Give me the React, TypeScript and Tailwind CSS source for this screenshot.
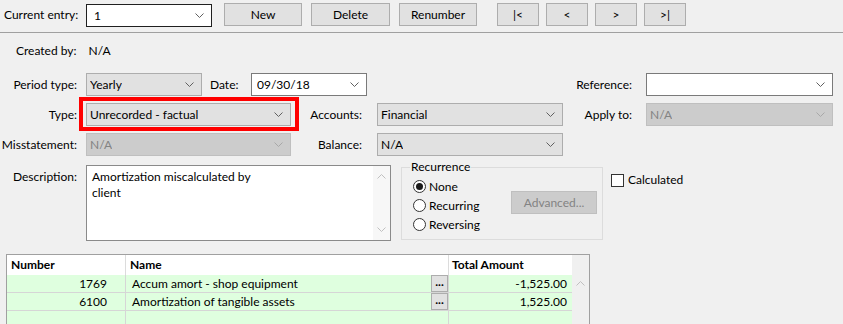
import React from "react";

// small windows-style dropdown arrow
const Chevron = ({ color = "#606060" }: { color?: string }) => (
  <svg width="9" height="5" viewBox="0 0 9 5" className="shrink-0">
    <path d="M0.5 0.5 L4.5 4.5 L8.5 0.5" fill="none" stroke={color} strokeWidth="1" />
  </svg>
);

const ChevronUp = ({ color = "#c0c0c0" }: { color?: string }) => (
  <svg width="9" height="5" viewBox="0 0 9 5" className="shrink-0">
    <path d="M0.5 4.5 L4.5 0.5 L8.5 4.5" fill="none" stroke={color} strokeWidth="1" />
  </svg>
);

type ComboProps = {
  text?: string;
  variant?: "white" | "gray" | "disabled" | "focus";
  className?: string;
};

const Combo = ({ text = "", variant = "gray", className = "" }: ComboProps) => {
  const look =
    variant === "white"
      ? "bg-white border-[#7a7a7a] text-black pl-[5px]"
      : variant === "focus"
      ? "bg-white border-[#202020] text-black pl-[7px]"
      : variant === "disabled"
      ? "bg-[#cccccc] border-[#bfbfbf] text-[#838383] pl-[3px]"
      : "bg-[#e1e1e1] border-[#adadad] text-black pl-[3px]";
  return (
    <div className={`flex items-center h-[23px] border pr-[7px] shrink-0 ${look} ${className}`}>
      <span className="truncate">{text}</span>
      <span className="ml-auto">
        <Chevron color={variant === "disabled" ? "#a8a8a8" : "#606060"} />
      </span>
    </div>
  );
};

const Btn = ({ label, className = "" }: { label: string; className?: string }) => (
  <button
    className={`h-[23px] border border-[#adadad] bg-[#e1e1e1] text-black flex items-center justify-center shrink-0 ${className}`}
  >
    {label}
  </button>
);

const Radio = ({ label, checked = false }: { label: string; checked?: boolean }) => (
  <div className="h-[19px] flex items-center">
    <span className="w-[13px] h-[13px] rounded-full border border-[#333] bg-white flex items-center justify-center">
      {checked && <span className="w-[7px] h-[7px] rounded-full bg-[#1a1a1a]" />}
    </span>
    <span className="ml-[3px]">{label}</span>
  </div>
);

const rows = [
  { num: "1769", name: "Accum amort - shop equipment", amt: "-1,525.00" },
  { num: "6100", name: "Amortization of tangible assets", amt: "1,525.00" },
];

export default function App() {
  return (
    <div className="w-[843px] h-[324px] overflow-hidden bg-[#f0f0f0] text-[12px] leading-[16px] text-black font-['Segoe_UI','Lato',sans-serif]">
      {/* toolbar */}
      <div className="h-[33px] border-b border-[#a0a0a0] flex items-start pt-[3px] pl-[4px]">
        <span className="w-[82px] h-[24px] flex items-center">Current entry:</span>
        <Combo text="1" variant="focus" className="w-[126px] mt-[1px]" />
        <Btn label="New" className="ml-[12px] w-[78px]" />
        <Btn label="Delete" className="ml-[9px] w-[79px]" />
        <Btn label="Renumber" className="ml-[9px] w-[78px]" />
        <Btn label="|<" className="ml-[20px] w-[42px]" />
        <Btn label="<" className="ml-[7px] w-[42px]" />
        <Btn label=">" className="ml-[7px] w-[42px]" />
        <Btn label=">|" className="ml-[7px] w-[42px]" />
      </div>

      {/* created by */}
      <div className="mt-[8px] h-[20px] pl-[16px] flex items-center">
        <span>Created by:</span>
        <span className="ml-[12px]">N/A</span>
      </div>

      {/* period / date / reference */}
      <div className="mt-[12px] h-[23px] flex items-center">
        <span className="w-[77px] text-right">Period type:</span>
        <Combo text="Yearly" className="ml-[9px] w-[116px]" />
        <span className="ml-[8px] w-[41px]">Date:</span>
        <Combo text="09/30/18" variant="white" className="w-[116px]" />
        <span className="w-[279px] text-right pr-[14px]">Reference:</span>
        <Combo variant="white" className="w-[187px]" />
      </div>

      {/* type / accounts / apply to */}
      <div className="mt-[7px] h-[23px] flex items-center">
        <span className="w-[77px] text-right">Type:</span>
        <div className="relative ml-[9px]">
          <Combo text="Unrecorded - factual" className="w-[205px]" />
          <span className="absolute left-[-7px] top-[-6px] right-[-8px] bottom-[-5px] border-[4px] border-[#ff0000] pointer-events-none" />
        </div>
        <span className="w-[86px] text-right pr-[15px]">Accounts:</span>
        <Combo text="Financial" className="w-[186px]" />
        <span className="w-[83px] text-right pr-[14px]">Apply to:</span>
        <Combo text="N/A" variant="disabled" className="w-[187px]" />
      </div>

      {/* misstatement / balance */}
      <div className="mt-[7px] h-[23px] flex items-center">
        <span className="w-[77px] text-right">Misstatement:</span>
        <Combo text="N/A" variant="disabled" className="ml-[9px] w-[205px]" />
        <span className="w-[86px] text-right pr-[15px]">Balance:</span>
        <Combo text="N/A" className="w-[186px]" />
      </div>

      {/* description / recurrence / calculated */}
      <div className="mt-[9px] flex items-start">
        <span className="w-[77px] text-right pt-[4px]">Description:</span>
        <div className="ml-[9px] w-[305px] h-[76px] border border-[#8a8a8a] bg-white flex">
          <div className="flex-1 pl-[5px] pt-[3px]">
            Amortization miscalculated by
            <br />
            client
          </div>
          <div className="w-[17px] bg-[#f7f7f7] flex flex-col items-center justify-between py-[8px]">
            <ChevronUp />
            <Chevron color="#c0c0c0" />
          </div>
        </div>

        <fieldset className="ml-[10px] mt-[-6px] w-[202px] h-[81px] border border-[#dcdcdc] pl-[11px] pr-[4px]">
          <legend className="ml-[-3px] px-[1px]">Recurrence</legend>
          <div className="flex mt-[2px]">
            <div className="w-[98px]">
              <Radio label="None" checked />
              <Radio label="Recurring" />
              <Radio label="Reversing" />
            </div>
            <button className="mt-[14px] w-[86px] h-[23px] border border-[#bfbfbf] bg-[#cccccc] text-[#838383]">
              Advanced...
            </button>
          </div>
        </fieldset>

        <div className="ml-[8px] mt-[7px] flex items-center">
          <span className="w-[13px] h-[13px] border border-[#333] bg-white" />
          <span className="ml-[4px]">Calculated</span>
        </div>
      </div>

      {/* accounts grid */}
      <div className="mt-[13px] ml-[6px] w-[584px] h-[90px] border border-[#a0a0a0] bg-white flex">
        <div className="w-[565px]">
          <div className="h-[20px] flex font-bold">
            <div className="w-[119px] border-r border-[#dcdcdc] pl-[4px] flex items-center">Number</div>
            <div className="w-[323px] border-r border-[#dcdcdc] pl-[4px] flex items-center">Name</div>
            <div className="flex-1 pl-[3px] flex items-center">Total Amount</div>
          </div>
          {rows.map((r) => (
            <div key={r.num} className="h-[18px] flex bg-[#dfffdf] border-b border-[#d6d6d6]">
              <div className="w-[119px] border-r border-[#d6d6d6] pr-[18px] flex items-center justify-end">{r.num}</div>
              <div className="w-[323px] border-r border-[#d6d6d6] pl-[6px] flex items-center">
                <span>{r.name}</span>
                <span className="ml-auto w-[17px] h-[17px] border border-[#adadad] bg-[#e1e1e1] flex items-center justify-center font-bold leading-none pb-[4px]">
                  ...
                </span>
              </div>
              <div className="flex-1 pr-[5px] flex items-center justify-end">{r.amt}</div>
            </div>
          ))}
          <div className="h-[18px] flex bg-[#dfffdf]">
            <div className="w-[119px] border-r border-[#d6d6d6]" />
            <div className="w-[323px] border-r border-[#d6d6d6]" />
            <div className="flex-1" />
          </div>
        </div>
        <div className="w-[17px] bg-[#f0f0f0] flex justify-center pt-[26px]">
          <ChevronUp />
        </div>
      </div>
    </div>
  );
}
